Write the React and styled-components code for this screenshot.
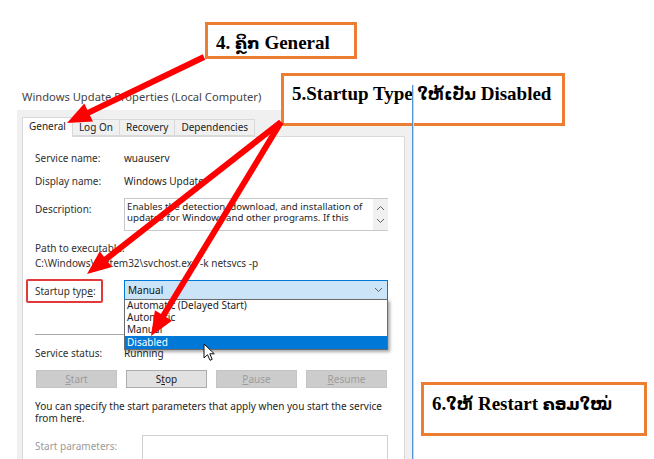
import React from "react"
import styled, { createGlobalStyle } from "styled-components"

const GlobalStyle = createGlobalStyle`
  html, body {
    margin: 0;
    padding: 0;
    background: #fff;
  }
`

const ARROWS = [
    { from: [204, 57], to: [67, 123] },
    { from: [281, 122], to: [87, 274] },
    { from: [281, 122], to: [151, 336] },
]

function arrowShape(from, to, head = 24, half = 10) {
    const [x1, y1] = from
    const [x2, y2] = to
    const len = Math.hypot(x2 - x1, y2 - y1)
    const ux = (x2 - x1) / len
    const uy = (y2 - y1) / len
    const bx = x2 - ux * head
    const by = y2 - uy * head
    const px = -uy * half
    const py = ux * half
    return {
        line: { x1, y1, x2: bx + ux * 3, y2: by + uy * 3 },
        head: `${x2},${y2} ${bx + px},${by + py} ${bx - px},${by - py}`,
    }
}

export default function App() {
    return (
        <Page>
            <GlobalStyle />
            <Win>
                <Title>Windows Update Properties (Local Computer)</Title>
                <Frame>
                    <Tabs>
                        <Tab $active>General</Tab>
                        <Tab>Log On</Tab>
                        <Tab>Recovery</Tab>
                        <Tab>Dependencies</Tab>
                    </Tabs>
                    <Panel>
                        <Row>
                            <Label>Service name:</Label>
                            <Value>wuauserv</Value>
                        </Row>
                        <Row $gap={9}>
                            <Label>Display name:</Label>
                            <Value>Windows Update</Value>
                        </Row>
                        <Row $gap={10}>
                            <Label $pad={4}>Description:</Label>
                            <TextArea>
                                <TextBody>
                                    Enables the detection, download, and installation of
                                    updates for Windows and other programs. If this
                                </TextBody>
                                <ScrollCol>
                                    <Chevron up />
                                    <Chevron />
                                </ScrollCol>
                            </TextArea>
                        </Row>
                        <Line $gap={10}>Path to executable:</Line>
                        <Line $gap={1}>C:\Windows\System32\svchost.exe -k netsvcs -p</Line>
                        <Row $gap={9}>
                            <Label>
                                <RedMark>Startup typ<u>e</u>:</RedMark>
                            </Label>
                            <Select>
                                Manual
                                <SelectArrow>
                                    <Chevron />
                                </SelectArrow>
                                <Options>
                                    <Option>Automatic (Delayed Start)</Option>
                                    <Option>Automatic</Option>
                                    <Option>Manual</Option>
                                    <Option $selected>Disabled</Option>
                                </Options>
                            </Select>
                        </Row>
                        <Separator />
                        <Row $gap={11}>
                            <Label>Service status:</Label>
                            <Value>Running</Value>
                        </Row>
                        <Buttons>
                            <Button disabled><u>S</u>tart</Button>
                            <Button>S<u>t</u>op</Button>
                            <Button disabled><u>P</u>ause</Button>
                            <Button disabled><u>R</u>esume</Button>
                        </Buttons>
                        <Paragraph>
                            You can specify the start parameters that apply when you start the service
                            <br />from here.
                        </Paragraph>
                        <Row $gap={11} $label={107}>
                            <Label $pad={4} $muted>Start parameters:</Label>
                            <Input />
                        </Row>
                    </Panel>
                </Frame>
            </Win>

            <Callout $x={205} $y={22} $w={152} $h={37}>4. <Lao>ຄຼິກ</Lao> General</Callout>
            <Callout $x={281} $y={73} $w={284} $h={53}>5.Startup Type <Lao>ໃຫ້ເປັນ</Lao> Disabled</Callout>
            <Callout $x={421} $y={382} $w={226} $h={54} $top={9}>6.<Lao>ໃຫ້</Lao> Restart <Lao>ຄອມໃໝ່</Lao></Callout>

            <WindowEdge />

            <Overlay width="654" height="459">
                {ARROWS.map((a, i) => {
                    const s = arrowShape(a.from, a.to)
                    return (
                        <g key={i}>
                            <line {...s.line} stroke="#ff0000" strokeWidth="6" />
                            <polygon points={s.head} fill="#ff0000" />
                        </g>
                    )
                })}
            </Overlay>

            <Cursor width="13" height="19" viewBox="0 0 13 19">
                <path d="M1 1 L1 15 L4.5 11.7 L7 17.3 L9.2 16.3 L6.8 10.8 L11.3 10.8 Z" fill="#fff" stroke="#111" strokeWidth="1" strokeLinejoin="round" />
            </Cursor>
        </Page>
    )
}

function Chevron({ up }) {
    return (
        <svg width="9" height="6" viewBox="0 0 9 6">
            <polyline
                points={up ? "1,5 4.5,1.5 8,5" : "1,1 4.5,4.5 8,1"}
                fill="none"
                stroke="#606060"
                strokeWidth="1"
            />
        </svg>
    )
}

const Page = styled.div`
    position: relative;
    width: 654px;
    height: 459px;
    overflow: hidden;
    background: #fff;
    font-family: "Noto Sans", "DejaVu Sans", sans-serif;
    font-size: 10px;
    color: #262626;
`
const Win = styled.div`
    margin-left: 17px;
    width: 396px;
    height: 100%;
    display: flex;
    flex-direction: column;
`
const Title = styled.div`
    flex-shrink: 0;
    margin-top: 89px;
    height: 21px;
    padding-left: 5px;
    line-height: 15px;
    font-size: 11.2px;
    color: #444;
`
const Frame = styled.div`
    flex: 1;
    min-height: 0;
    display: flex;
    flex-direction: column;
    background: #f0f0f0;
    padding: 7px 8px 0 5px;
`
const Tabs = styled.div`
    flex-shrink: 0;
    display: flex;
    align-items: flex-end;
    height: 19px;
`
const Tab = styled.div`
    position: relative;
    z-index: ${(p) => (p.$active ? 1 : 0)};
    height: ${(p) => (p.$active ? 20 : 17)}px;
    margin-bottom: ${(p) => (p.$active ? -1 : 0)}px;
    margin-left: ${(p) => (p.$active ? 0 : -1)}px;
    padding: 0 6px;
    box-sizing: border-box;
    border: 1px solid #d9d9d9;
    border-bottom: ${(p) => (p.$active ? "none" : "1px solid #d9d9d9")};
    background: ${(p) => (p.$active ? "#fff" : "#f0f0f0")};
    line-height: ${(p) => (p.$active ? 17 : 15)}px;
    color: #222;
`
const Panel = styled.div`
    flex: 1;
    min-height: 0;
    display: flex;
    flex-direction: column;
    background: #fff;
    border: 1px solid #d9d9d9;
    border-bottom: none;
    padding: 14px 16px 0 12px;
    & > * {
        flex-shrink: 0;
    }
`
const Row = styled.div`
    display: grid;
    grid-template-columns: ${(p) => p.$label || 89}px 1fr;
    align-items: start;
    margin-top: ${(p) => p.$gap || 0}px;
    line-height: 14px;
`
const Label = styled.div`
    padding-top: ${(p) => p.$pad || 0}px;
    color: ${(p) => (p.$muted ? "#9a9a9a" : "#303030")};
`
const Value = styled.div`
    color: #1e1e1e;
`
const Line = styled.div`
    margin-top: ${(p) => p.$gap}px;
    line-height: 14px;
    color: #303030;
`
const TextArea = styled.div`
    display: flex;
    height: 33px;
    box-sizing: border-box;
    border: 1px solid #c8c8c8;
    border-right: none;
    overflow: hidden;
`
const TextBody = styled.div`
    flex: 1;
    padding: 2px 2px 0 2px;
    font-size: 9.7px;
    line-height: 11px;
    color: #262626;
`
const ScrollCol = styled.div`
    width: 15px;
    background: #f0f0f0;
    display: flex;
    flex-direction: column;
    align-items: center;
    justify-content: space-around;
    padding: 2px 0;
`
const RedMark = styled.span`
    display: inline-block;
    box-sizing: border-box;
    width: 77px;
    height: 24px;
    margin-left: -9px;
    padding: 0 0 0 7px;
    border: 2px solid #e23a3a;
    border-radius: 2px;
    line-height: 20px;
    color: #303030;
    white-space: nowrap;
`
const Select = styled.div`
    position: relative;
    margin-top: 1px;
    height: 20px;
    box-sizing: border-box;
    border: 1px solid #0078d7;
    background: #cce4f7;
    padding-left: 3px;
    line-height: 18px;
    color: #111;
`
const SelectArrow = styled.span`
    position: absolute;
    right: 4px;
    top: 6px;
    line-height: 0;
`
const Options = styled.div`
    position: absolute;
    z-index: 3;
    top: 18px;
    left: -1px;
    right: -1px;
    background: #fff;
    border: 1px solid #6b6b6b;
    box-shadow: 2px 2px 3px rgba(0, 0, 0, 0.35);
`
const Option = styled.div`
    height: ${(p) => (p.$selected ? 13 : 12)}px;
    line-height: ${(p) => (p.$selected ? 13 : 11)}px;
    padding-left: 2px;
    background: ${(p) => (p.$selected ? "#0078d7" : "#fff")};
    color: ${(p) => (p.$selected ? "#fff" : "#222")};
`
const Separator = styled.div`
    margin-top: 31px;
    height: 1px;
    background: #a8a8a8;
`
const Buttons = styled.div`
    display: grid;
    grid-template-columns: repeat(4, 81px);
    column-gap: 9px;
    margin-top: 10px;
    padding-left: 1px;
`
const Button = styled.div`
    height: 18px;
    box-sizing: border-box;
    border: 1px solid ${(p) => (p.disabled ? "#c4c4c4" : "#adadad")};
    background: ${(p) => (p.disabled ? "#cccccc" : "#e1e1e1")};
    color: ${(p) => (p.disabled ? "#9c9c9c" : "#1a1a1a")};
    text-align: center;
    line-height: 16px;
`
const Paragraph = styled.div`
    margin-top: 12px;
    line-height: 12px;
    color: #262626;
`
const Input = styled.div`
    height: 26px;
    box-sizing: border-box;
    border: 1px solid #d0d0d0;
    background: #fff;
`
const Callout = styled.div`
    position: absolute;
    z-index: 4;
    left: ${(p) => p.$x}px;
    top: ${(p) => p.$y}px;
    width: ${(p) => p.$w}px;
    height: ${(p) => p.$h}px;
    box-sizing: border-box;
    border: 3px solid #ed7d31;
    background: #fff;
    padding: ${(p) => p.$top || 8}px 0 0 8px;
    font-family: "Liberation Serif", "DejaVu Sans", serif;
    font-weight: bold;
    font-size: 19px;
    line-height: 19px;
    color: #000;
    white-space: nowrap;
`
const Lao = styled.span`
    font-size: 16px;
    font-weight: 600;
`
const WindowEdge = styled.div`
    position: absolute;
    z-index: 5;
    left: 412px;
    top: 85px;
    width: 1px;
    height: 374px;
    background: #4f93d8;
    box-shadow: 1px 0 0 #c3dbf2;
`
const Overlay = styled.svg`
    position: absolute;
    z-index: 6;
    left: 0;
    top: 0;
    pointer-events: none;
`
const Cursor = styled.svg`
    position: absolute;
    z-index: 7;
    left: 203px;
    top: 343px;
`
